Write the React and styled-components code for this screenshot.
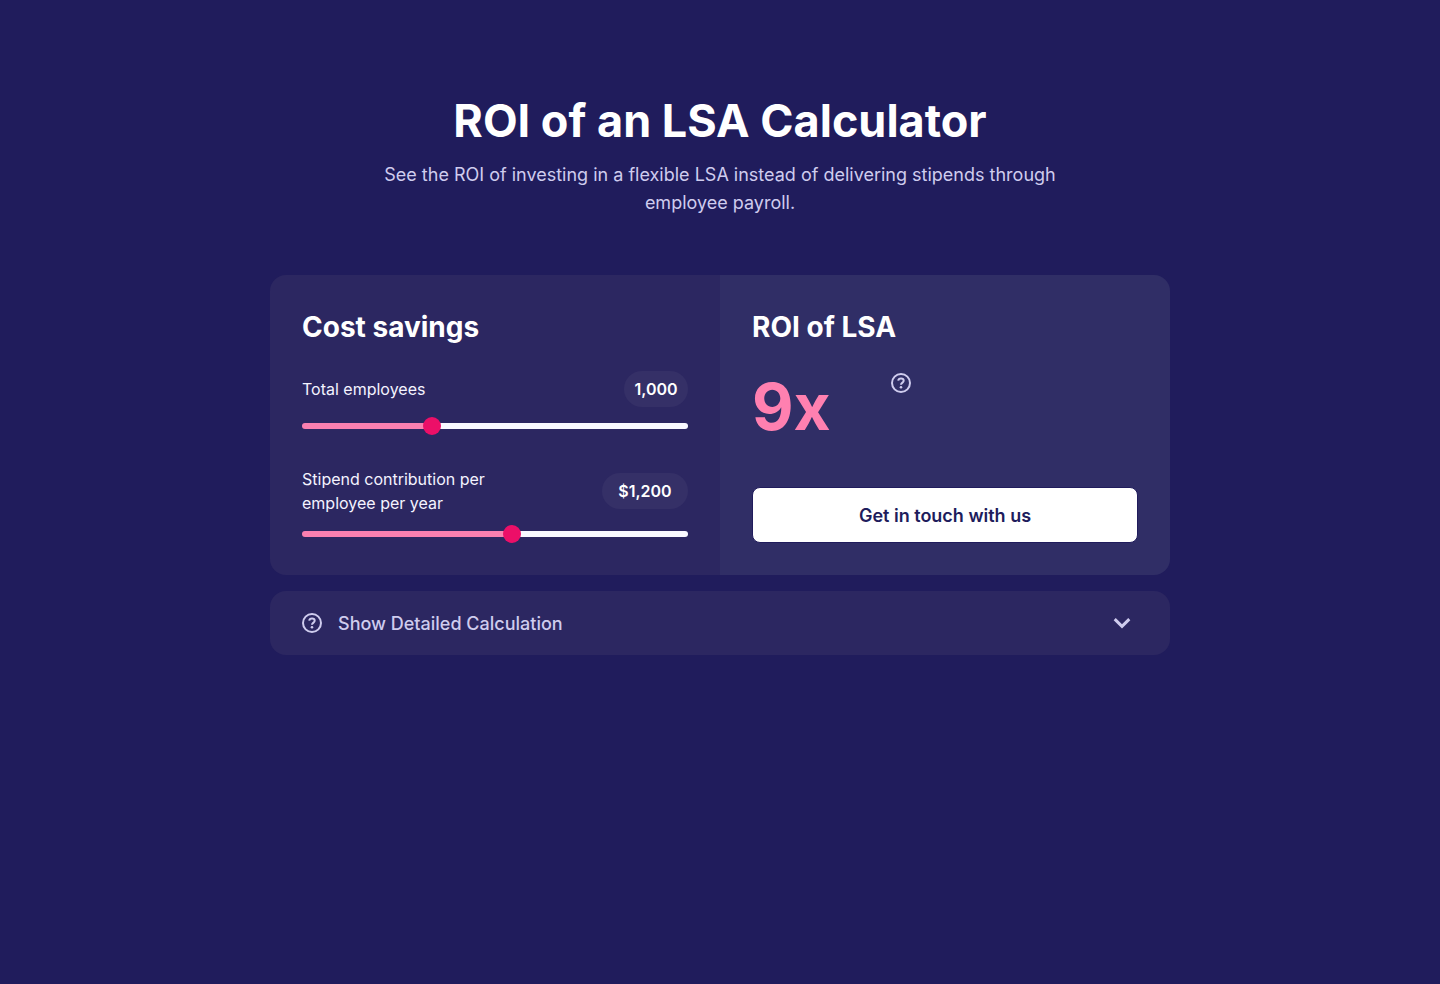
import React, { useState } from 'react'
import styled, { createGlobalStyle } from 'styled-components'

const GlobalStyle = createGlobalStyle`
  * {
    box-sizing: border-box;
  }
  body {
    margin: 0;
    background-color: #201c5c;
    color: #fff;
    font-family: Inter, 'Liberation Sans', sans-serif;
  }
`

const Page = styled.main`
  max-width: 932px;
  margin: 0 auto;
  padding: 92px 16px 64px;
`

const Header = styled.header`
  display: flex;
  flex-direction: column;
  align-items: center;
  gap: 12px;
  margin-bottom: 58px;
  text-align: center;
`

const Title = styled.h1`
  margin: 0;
  font-size: 45px;
  font-weight: 700;
  line-height: 57px;
`

const Subtitle = styled.p`
  max-width: 700px;
  margin: 0;
  color: #cfccee;
  font-size: 18px;
  line-height: 28px;
`

const Card = styled.section`
  display: grid;
  grid-template-columns: 1fr 1fr;
  margin-bottom: 16px;
  border-radius: 16px;
  overflow: hidden;
  @media only screen and (max-width: 720px) {
    grid-template-columns: 1fr;
  }
`

const Panel = styled.div`
  display: flex;
  flex-direction: column;
  padding: 32px;
  background-color: ${(props) => (props.$light ? '#302e66' : '#2c2761')};
`

const PanelTitle = styled.h2`
  margin: 0 0 24px;
  font-size: 28px;
  font-weight: 700;
  line-height: 40px;
`

const Field = styled.div`
  display: flex;
  flex-direction: column;
  gap: 10px;
  & + & {
    margin-top: 32px;
  }
`

const FieldRow = styled.div`
  display: flex;
  justify-content: space-between;
  align-items: center;
`

const Label = styled.label`
  max-width: 200px;
  color: #f4f3ff;
  font-size: 16px;
  line-height: 24px;
`

const Value = styled.input`
  width: ${(props) => (props.$wide ? '86px' : '64px')};
  height: 36px;
  padding: 0;
  border: 0;
  border-radius: 18px;
  background-color: #353067;
  color: #fff;
  font-family: inherit;
  font-size: 16px;
  font-weight: 600;
  text-align: center;
`

const Range = styled.input`
  width: 100%;
  height: 18px;
  margin: 0;
  background: transparent;
  appearance: none;
  cursor: pointer;
  &::-webkit-slider-runnable-track {
    height: 6px;
    border-radius: 3px;
    background: linear-gradient(
      to right,
      #fa80b0 var(--filled),
      #f9f9ff var(--filled)
    );
  }
  &::-webkit-slider-thumb {
    width: 18px;
    height: 18px;
    margin-top: -6px;
    border: 0;
    border-radius: 50%;
    background-color: #ec0f68;
    appearance: none;
  }
`

const Result = styled.div`
  display: flex;
  align-items: flex-start;
  margin-bottom: 32px;
`

const Multiplier = styled.output`
  min-width: 137px;
  color: #ff80b0;
  font-size: 64px;
  font-weight: 700;
  line-height: 72px;
`

const HelpButton = styled.button`
  display: flex;
  padding: 2px;
  border: 0;
  background: transparent;
  color: #cfccee;
  cursor: pointer;
`

const ContactButton = styled.button`
  height: 56px;
  margin-top: auto;
  border: 1px solid #201c5c;
  border-radius: 8px;
  background-color: #fff;
  color: #201c5c;
  font-family: inherit;
  font-size: 18px;
  font-weight: 600;
  cursor: pointer;
`

const DetailsButton = styled.button`
  display: flex;
  align-items: center;
  gap: 16px;
  width: 100%;
  height: 64px;
  padding: 0 32px;
  border: 0;
  border-radius: 16px;
  background-color: #2c2761;
  color: #cfccee;
  font-family: inherit;
  font-size: 18px;
  font-weight: 500;
  text-align: left;
  cursor: pointer;
`

const Chevron = styled.svg`
  margin-left: auto;
`

const HelpIcon = () => (
  <svg width='20' height='20' viewBox='0 0 20 20' fill='none' aria-hidden='true'>
    <circle cx='10' cy='10' r='9' stroke='currentColor' strokeWidth='2' />
    <path
      d='M7.2 7.7C7.4 6.4 8.5 5.6 10 5.6C11.6 5.6 12.7 6.4 12.7 7.8C12.7 9.6 10 9.6 10 11.8'
      stroke='currentColor'
      strokeWidth='2'
    />
    <circle cx='10' cy='14.3' r='1.3' fill='currentColor' />
  </svg>
)

const Slider = ({ id, label, prefix = '', value, min, max, step, wide, onChange }) => {
  const ratio = (value - min) / (max - min)

  const handleText = (e) => {
    const next = Number(e.target.value.replace(/\D/g, ''))
    onChange(Math.min(next, max))
  }

  return (
    <Field>
      <FieldRow>
        <Label htmlFor={id}>{label}</Label>
        <Value
          type='text'
          $wide={wide}
          aria-label={`${label} value`}
          value={prefix + value.toLocaleString('en-US')}
          onChange={handleText}
        />
      </FieldRow>
      <Range
        id={id}
        type='range'
        min={min}
        max={max}
        step={step}
        value={value}
        style={{ '--filled': `${ratio * 100}%` }}
        onChange={(e) => onChange(Number(e.target.value))}
      />
    </Field>
  )
}

const App = () => {
  const [employees, setEmployees] = useState(1000)
  const [stipend, setStipend] = useState(1200)

  return (
    <>
      <GlobalStyle />
      <Page>
        <Header>
          <Title>ROI of an LSA Calculator</Title>
          <Subtitle>
            See the ROI of investing in a flexible LSA instead of delivering
            stipends through employee payroll.
          </Subtitle>
        </Header>
        <Card>
          <Panel>
            <PanelTitle>Cost savings</PanelTitle>
            <Slider
              id='employees'
              label='Total employees'
              value={employees}
              min={20}
              max={3000}
              step={10}
              onChange={setEmployees}
            />
            <Slider
              id='stipend'
              label='Stipend contribution per employee per year'
              prefix='$'
              value={stipend}
              min={0}
              max={2200}
              step={50}
              wide
              onChange={setStipend}
            />
          </Panel>
          <Panel $light>
            <PanelTitle>ROI of LSA</PanelTitle>
            <Result>
              <Multiplier htmlFor='employees stipend'>9x</Multiplier>
              <HelpButton type='button' aria-label='About this number'>
                <HelpIcon />
              </HelpButton>
            </Result>
            <ContactButton type='button'>Get in touch with us</ContactButton>
          </Panel>
        </Card>
        <DetailsButton type='button' aria-expanded='false'>
          <HelpIcon />
          Show Detailed Calculation
          <Chevron width='32' height='32' viewBox='0 0 32 32' fill='none' aria-hidden='true'>
            <path d='M8.7 12.2L16 19.3L23.3 12.2' stroke='currentColor' strokeWidth='3' />
          </Chevron>
        </DetailsButton>
      </Page>
    </>
  )
}

export default App
